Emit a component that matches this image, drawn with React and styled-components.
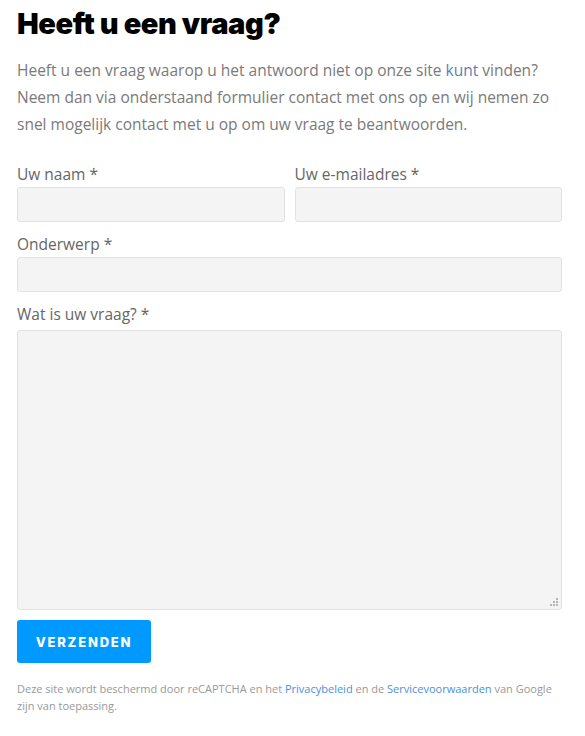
import { styled, createGlobalStyle } from "styled-components";

const GlobalStyle = createGlobalStyle`
  body {
    margin: 0;
    background: #fff;
    font-family: "Open Sans", "Liberation Sans", sans-serif;
  }
`;

export default function App() {
  return (
    <>
      <GlobalStyle />
      <Page>
        <Title>Heeft u een vraag?</Title>
        <Intro>
          Heeft u een vraag waarop u het antwoord niet op onze site{" "}
          <IntroLink href="#">kunt</IntroLink> vinden? Neem dan via onderstaand
          formulier contact met ons op en wij nemen zo snel mogelijk contact met
          u op om uw vraag te beantwoorden.
        </Intro>
        <Form onSubmit={(e) => e.preventDefault()}>
          <Row>
            <Field>
              <Label>Uw naam *</Label>
              <Input type="text" />
            </Field>
            <Field>
              <Label>Uw e-mailadres *</Label>
              <Input type="email" />
            </Field>
          </Row>
          <Field>
            <Label>Onderwerp *</Label>
            <Input type="text" />
          </Field>
          <Field>
            <Label>Wat is uw vraag? *</Label>
            <AreaWrap>
              <TextArea />
              {/* dotted resize grip like the original */}
              <Grip width="9" height="9" viewBox="0 0 9 9">
                <rect x="6" y="0" width="2" height="2" />
                <rect x="3" y="3" width="2" height="2" />
                <rect x="6" y="3" width="2" height="2" />
                <rect x="0" y="6" width="2" height="2" />
                <rect x="3" y="6" width="2" height="2" />
                <rect x="6" y="6" width="2" height="2" />
              </Grip>
            </AreaWrap>
          </Field>
          <SubmitButton type="submit">Verzenden</SubmitButton>
        </Form>
        <Notice>
          Deze site wordt beschermd door reCAPTCHA en het{" "}
          <NoticeLink href="#">Privacybeleid</NoticeLink> en de{" "}
          <NoticeLink href="#">Servicevoorwaarden</NoticeLink> van Google zijn
          van toepassing.
        </Notice>
      </Page>
    </>
  );
}

const Page = styled.div`
  width: 545px;
  padding: 4px 17px 20px;
`;

const Title = styled.h1`
  margin: 0;
  font-family: Inter, "Liberation Sans", sans-serif;
  font-weight: 900;
  font-size: 29px;
  line-height: 40px;
  color: #000;
  letter-spacing: -0.4px;
`;

const Intro = styled.p`
  margin: 13px 0 0;
  font-size: 15.5px;
  line-height: 27px;
  color: #7a7a7a;
`;

const IntroLink = styled.a`
  color: #5b7fb5;
  text-decoration: none;
`;

const Form = styled.form`
  display: flex;
  flex-direction: column;
  gap: 12px;
  margin-top: 26px;
`;

const Row = styled.div`
  display: grid;
  grid-template-columns: 1fr 1fr;
  gap: 10px;
`;

const Field = styled.label`
  display: flex;
  flex-direction: column;
  gap: 3px;
`;

const Label = styled.span`
  font-size: 15.5px;
  line-height: 20px;
  color: #666;
`;

const Input = styled.input`
  box-sizing: border-box;
  height: 35px;
  width: 100%;
  background: #f4f4f4;
  border: 1px solid #e2e2e2;
  border-radius: 3px;
  padding: 0 10px;
  font: inherit;
`;

const AreaWrap = styled.div`
  position: relative;
  display: flex;
  margin-top: 3px;
`;

const TextArea = styled.textarea`
  box-sizing: border-box;
  height: 280px;
  width: 100%;
  background: #f4f4f4;
  border: 1px solid #e2e2e2;
  border-radius: 3px;
  padding: 10px;
  font: inherit;
  resize: none;
`;

const Grip = styled.svg`
  position: absolute;
  right: 3px;
  bottom: 3px;
  fill: #b5b5b5;
  pointer-events: none;
`;

const SubmitButton = styled.button`
  align-self: flex-start;
  margin-top: -2px;
  width: 134px;
  height: 43px;
  background: #0099ff;
  color: #fff;
  border: none;
  border-radius: 3px;
  font-family: Inter, "Liberation Sans", sans-serif;
  font-weight: 800;
  font-size: 13px;
  letter-spacing: 1.8px;
  text-transform: uppercase;
  cursor: pointer;
`;

const Notice = styled.p`
  margin: 17px 0 0;
  font-size: 11px;
  line-height: 17px;
  color: #999;
`;

const NoticeLink = styled.a`
  color: #4a90e2;
  text-decoration: none;
`;
